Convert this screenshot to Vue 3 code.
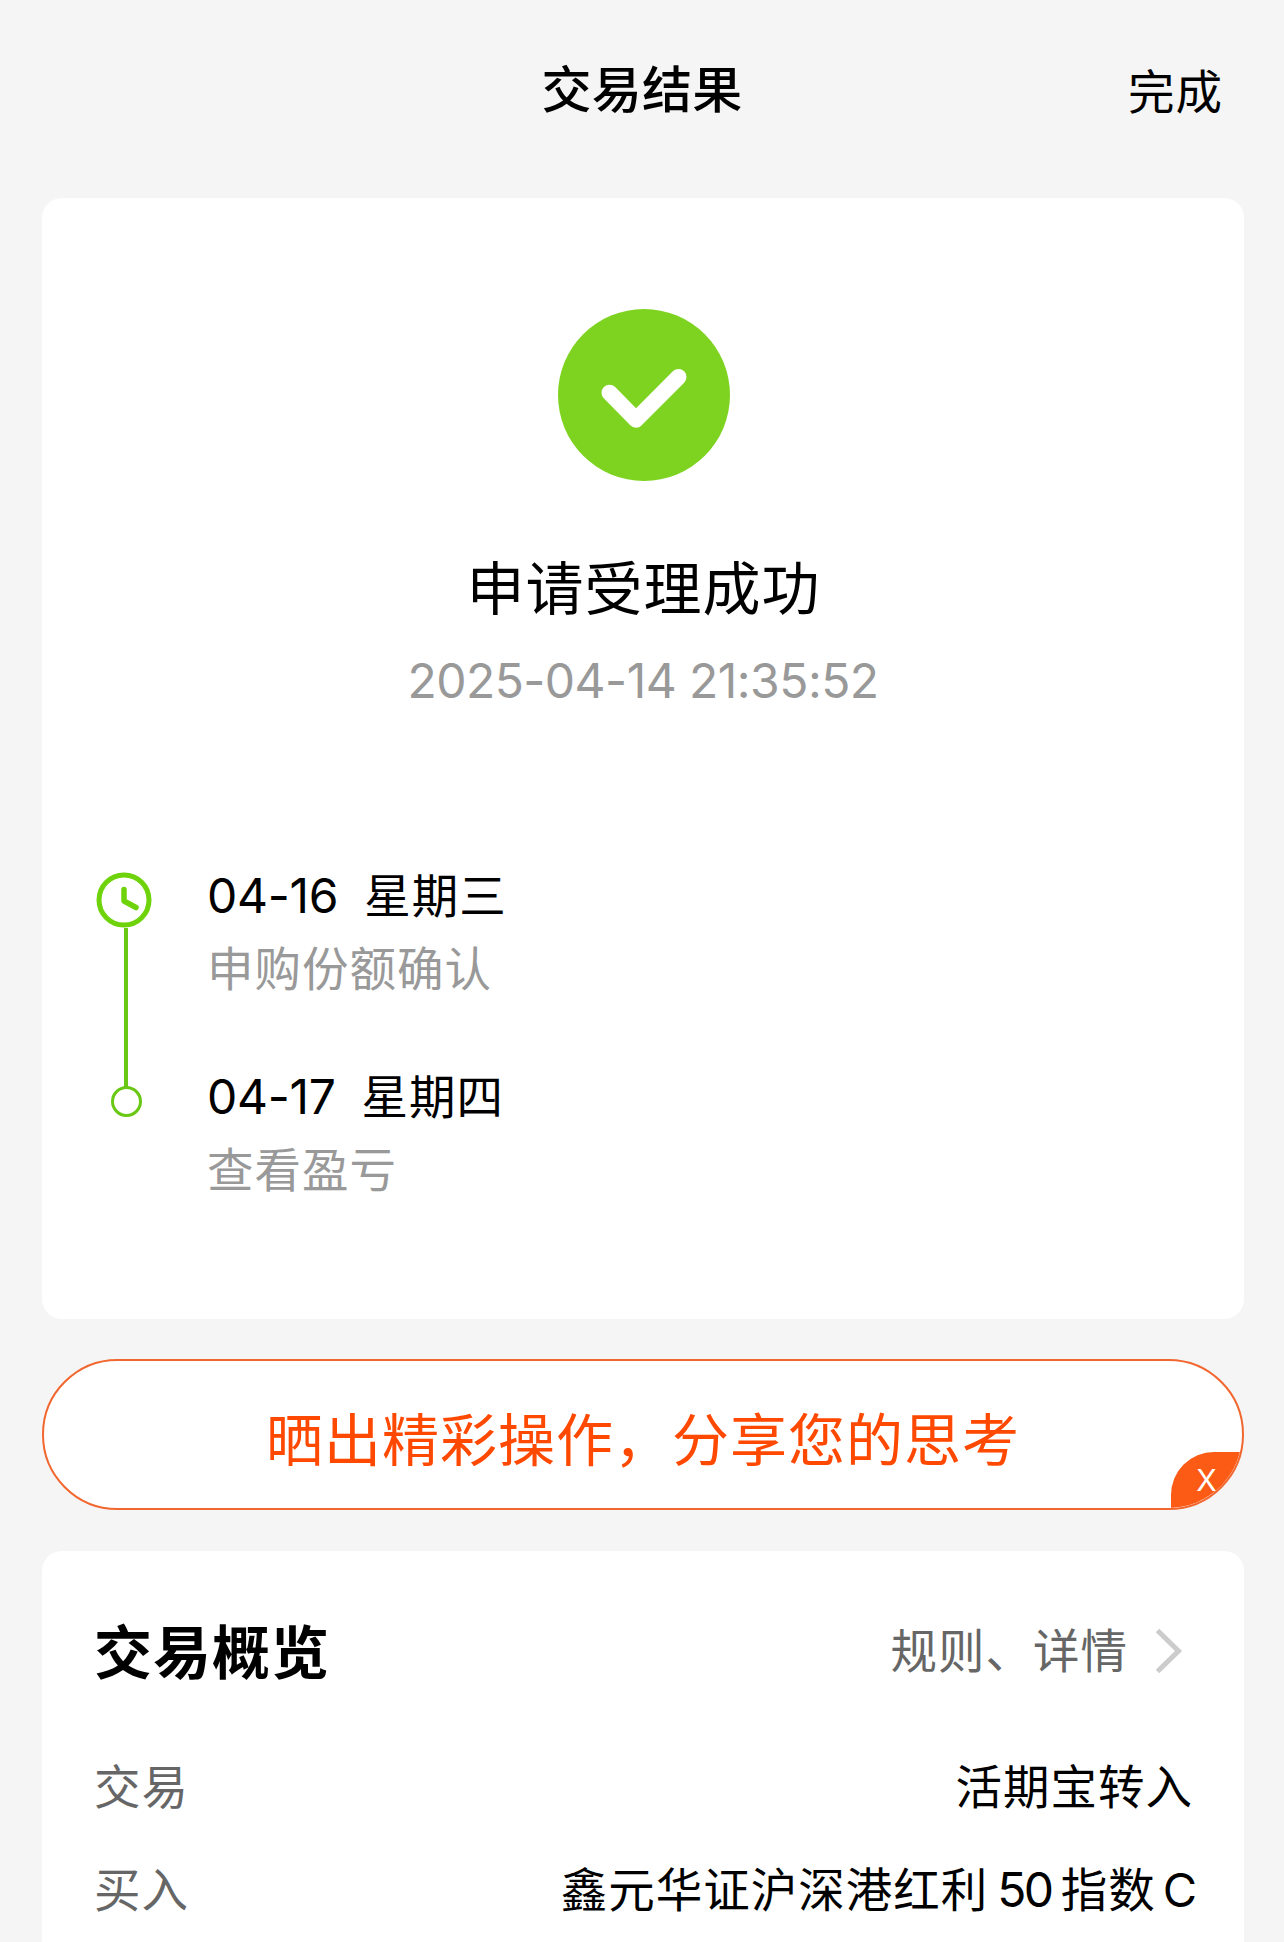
<script setup>
const steps = [
  { date: '04-16', day: '星期三', note: '申购份额确认', current: true },
  { date: '04-17', day: '星期四', note: '查看盈亏', current: false },
]
</script>

<template>
  <div class="page">
    <header class="header">
      <h1 class="title">交易结果</h1>
      <span class="done">完成</span>
    </header>

    <section class="card result">
      <svg class="success" width="172" height="172" viewBox="0 0 172 172">
        <circle cx="86" cy="86" r="86" fill="#7ed321" />
        <path d="M51.5 83.7 78 110.7 120.5 68" fill="none" stroke="#fff" stroke-width="16" stroke-linecap="round" stroke-linejoin="round" />
      </svg>
      <h2 class="status">申请受理成功</h2>
      <p class="time">2025-04-14 21:35:52</p>

      <div class="timeline">
        <div class="rail">
          <svg width="56" height="56" viewBox="0 0 56 56">
            <circle cx="28" cy="28" r="25" fill="none" stroke="#6fd30b" stroke-width="5" />
            <path d="M28 17.500V29L40 35.500" fill="none" stroke="#6fd30b" stroke-width="5.500" stroke-linecap="round" stroke-linejoin="round" />
          </svg>
          <span class="line"></span>
          <span class="dot"></span>
        </div>
        <ul class="steps">
          <li v-for="s in steps" :key="s.date" class="step">
            <div class="when"><span class="date">{{ s.date }}</span><span class="day">{{ s.day }}</span></div>
            <div class="note">{{ s.note }}</div>
          </li>
        </ul>
      </div>
    </section>

    <div class="share">
      <span class="share-text">晒出精彩操作，分享您的思考</span>
      <span class="close">X</span>
    </div>

    <section class="card overview">
      <div class="overview-head">
        <h3 class="overview-title">交易概览</h3>
        <div class="more">
          <span>规则、详情</span>
          <svg width="28" height="46" viewBox="0 0 28 46">
            <path d="M2.500 2.500 23.500 23 2.500 43.500" fill="none" stroke="#ccc" stroke-width="5" />
          </svg>
        </div>
      </div>
      <div class="row"><span class="label">交易</span><span class="value">活期宝转入</span></div>
      <div class="row">
        <span class="label">买入</span>
        <span class="value">鑫元华证沪深港红利<span class="num">50</span>指数<span class="latin">C</span></span>
      </div>
    </section>
  </div>
</template>

<style>
body {
  margin: 0;
  background: #f5f5f5;
}
</style>

<style scoped>
.page {
  box-sizing: border-box;
  width: 1284px;
  height: 1942px;
  overflow: hidden;
  padding: 0 40px 0 42px;
  background: #f5f5f5;
  color: #000;
  font-family: Inter, "Noto Sans CJK SC", sans-serif;
  font-size: 46.5px;
  line-height: 60px;
  letter-spacing: 1px;
}
h1, h2, h3, p, ul {
  margin: 0;
  padding: 0;
  font-weight: 400;
}
.header {
  display: grid;
  grid-template-columns: 1fr auto 1fr;
  height: 138px;
  padding-top: 60px;
}
.title {
  grid-column: 2;
  padding-right: 2px;
  font-size: 50px;
  font-weight: 500;
  letter-spacing: 0.3px;
}
.done {
  justify-self: end;
  padding: 2px 21px 0 0;
}
.card {
  background: #fff;
  border-radius: 20px;
}
.result {
  display: flex;
  flex-direction: column;
  align-items: center;
  height: 1010px;
  padding-top: 111px;
}
.success {
  display: block;
  margin-left: 2px;
}
.status {
  margin-top: 68px;
  padding-left: 1px;
  font-size: 58px;
  line-height: 80px;
  letter-spacing: 1px;
}
.time {
  margin-top: 22px;
  font-size: 48px;
  letter-spacing: -0.53px;
  color: #999;
}
.timeline {
  display: flex;
  align-self: stretch;
  margin-top: 155px;
  padding-left: 53px;
}
.rail {
  display: flex;
  flex-direction: column;
  align-items: center;
  width: 62px;
  padding-top: 6px;
}
.rail svg {
  display: block;
  margin-right: 4px;
}
.line {
  width: 4px;
  height: 159px;
  background: #69c813;
}
.dot {
  box-sizing: border-box;
  width: 31px;
  height: 31px;
  margin-top: -1px;
  border: 3px solid #69c813;
  border-radius: 50%;
}
.steps {
  padding-left: 50px;
  list-style: none;
}
.step {
  height: 201px;
}
.date {
  font-size: 48px;
  letter-spacing: -0.3px;
}
.day {
  margin-left: 26px;
}
.note {
  margin-top: 13px;
  color: #999;
}
.share {
  position: relative;
  box-sizing: border-box;
  height: 151px;
  margin: 40px 0 41px;
  border: 2px solid #f2672f;
  border-radius: 76px;
  overflow: hidden;
  background: #fff;
  color: #ff4800;
  font-size: 57px;
  line-height: 159px;
  letter-spacing: 1px;
  text-align: center;
}
.close {
  position: absolute;
  right: -2px;
  bottom: -2px;
  box-sizing: border-box;
  width: 73px;
  height: 58px;
  padding-right: 2px;
  border-top-left-radius: 43px;
  background: #fb5b14;
  color: #fff;
  font-size: 30px;
  font-weight: 400;
  line-height: 56px;
  letter-spacing: 0;
}
.overview {
  height: 500px;
  padding: 70px 51px 0 52px;
}
.overview-head {
  display: flex;
  justify-content: space-between;
  height: 136px;
}
.overview-title {
  font-size: 58px;
  font-weight: 700;
  line-height: 65px;
}
.more {
  display: flex;
  align-items: flex-start;
  color: #666;
}
.more svg {
  margin: 7px 10px 0 27px;
}
.row {
  display: flex;
  justify-content: space-between;
  height: 103px;
}
.label {
  color: #666;
}
.value {
  white-space: nowrap;
}
.num {
  margin: 0 9px 0 9px;
  font-size: 48px;
  letter-spacing: -2.5px;
}
.latin {
  margin: 0 -4px 0 7px;
  font-size: 47px;
  letter-spacing: 0;
}
</style>
